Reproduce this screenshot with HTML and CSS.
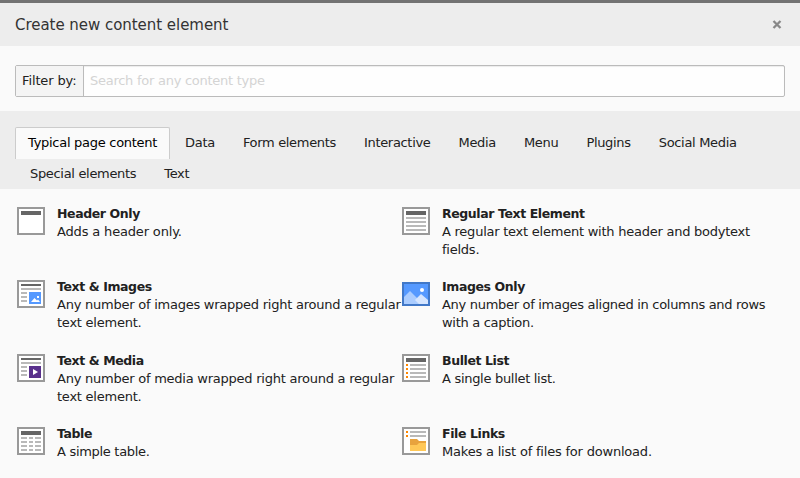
FILE: index.html
```
<!DOCTYPE html>
<html lang="en">
<head>
<meta charset="utf-8">
<title>Create new content element</title>
<link rel="stylesheet" href="styles.css">
</head>
<body>
<header class="modal-header">
  <h1>Create new content element</h1>
  <button class="close" aria-label="Close"><svg width="10" height="9" viewBox="0 0 10 9"><path d="M1.5 1l7 7M8.500 1l-7 7" stroke="#888" stroke-width="2.300"/></svg></button>
</header>
<div class="filter">
  <label for="q">Filter by:</label>
  <input id="q" type="text" placeholder="Search for any content type">
</div>
<nav class="tabs">
  <a class="active">Typical page content</a><a>Data</a><a>Form elements</a><a>Interactive</a><a>Media</a><a>Menu</a><a>Plugins</a><a>Social Media</a><a>Special elements</a><a>Text</a>
</nav>
<main class="items">
  <article>
    <svg class="icon" viewBox="0 0 28 28"><path class="frame" d="M1 1h26v26H1z"/><path class="dark" d="M4 4h20v4H4z"/></svg>
    <div><h2>Header Only</h2><p>Adds a header only.</p></div>
  </article>
  <article>
    <svg class="icon" viewBox="0 0 28 28"><path class="frame" d="M1 1h26v26H1z"/><path class="dark" d="M4 4h20v4H4z"/><path class="light" d="M4 10h20v2H4zM4 14h20v2H4zM4 18h20v2H4zM4 22h20v2H4z"/></svg>
    <div><h2>Regular Text Element</h2><p>A regular text element with header and bodytext<br>fields.</p></div>
  </article>
  <article>
    <svg class="icon" viewBox="0 0 28 28"><path class="frame" d="M1 1h26v26H1z"/><path class="dark" d="M4 4h20v2H4z"/><path class="light" d="M4 8h20v2H4zM4 12h6v2H4zM4 16h6v2H4zM4 20h6v2H4z"/><path fill="#5599ff" d="M12 12h12v12H12z"/><path fill="#fff" d="M20 16h2v2h-2zM14 22l3.500-4 2.500 2.500 1-1 2 2.500z"/></svg>
    <div><h2>Text &amp; Images</h2><p>Any number of images wrapped right around a regular<br>text element.</p></div>
  </article>
  <article>
    <svg class="icon" viewBox="0 0 28 28"><path fill="#4178c8" d="M0 2h28v24H0z"/><path fill="#5599ff" d="M2 4h24v20H2z"/><path fill="#aaccff" d="M2 17l6-6 9 9v4H2z"/><path fill="#d5e5ff" d="M13 20l6-6 7 6v4H17z"/><circle cx="20" cy="10" r="2" fill="#fff"/></svg>
    <div><h2>Images Only</h2><p>Any number of images aligned in columns and rows<br>with a caption.</p></div>
  </article>
  <article>
    <svg class="icon" viewBox="0 0 28 28"><path class="frame" d="M1 1h26v26H1z"/><path class="dark" d="M4 4h20v2H4z"/><path class="light" d="M4 8h20v2H4zM4 12h6v2H4zM4 16h6v2H4zM4 20h6v2H4z"/><path fill="#59308c" d="M12 12h12v12H12z"/><path fill="#fff" d="M16 15l5 3-5 3z"/></svg>
    <div><h2>Text &amp; Media</h2><p>Any number of media wrapped right around a regular<br>text element.</p></div>
  </article>
  <article>
    <svg class="icon" viewBox="0 0 28 28"><path class="frame" d="M1 1h26v26H1z"/><path class="dark" d="M4 4h20v4H4z"/><path class="light" d="M8 10h16v2H8zM8 14h16v2H8zM8 18h16v2H8zM8 22h16v2H8z"/><path class="orange" d="M4 10h2v2H4zM4 14h2v2H4zM4 18h2v2H4zM4 22h2v2H4z"/></svg>
    <div><h2>Bullet List</h2><p class="short">A single bullet list.</p></div>
  </article>
  <article>
    <svg class="icon" viewBox="0 0 28 28"><path class="frame" d="M1 1h26v26H1z"/><path class="dark" d="M4 4h20v4H4z"/><path class="light" d="M4 10h6v2H4zM12 10h4v2h-4zM18 10h6v2h-6zM4 14h6v2H4zM12 14h4v2h-4zM18 14h6v2h-6zM4 18h6v2H4zM12 18h4v2h-4zM18 18h6v2h-6zM4 22h6v2H4zM12 22h4v2h-4zM18 22h6v2h-6z"/></svg>
    <div><h2>Table</h2><p class="short">A simple table.</p></div>
  </article>
  <article>
    <svg class="icon" viewBox="0 0 28 28"><path class="frame" d="M1 1h26v26H1z"/><path class="light" d="M8 4h16v2H8zM8 8h16v2H8z"/><path class="orange" d="M4 4h2v2H4zM4 8h2v2H4z"/><path fill="#e8a33d" d="M8 12h7l2 2h7v4H8z"/><path fill="#ffc857" d="M8 18h7l2-2h7v8H8z"/></svg>
    <div><h2>File Links</h2><p class="links">Makes a list of files for download.</p></div>
  </article>
</main>
</body>
</html>
```
FILE: styles.css
```
* { box-sizing: border-box; }
body {
  margin: 0;
  height: 478px;
  overflow: hidden;
  background: #fafafa;
  border-top: 3px solid #737373;
  color: #212121;
  font: 13px/18px "DejaVu Sans", Verdana, sans-serif;
  letter-spacing: -.24px;
}
h1, h2, p { margin: 0; }
.modal-header {
  display: flex;
  align-items: center;
  justify-content: space-between;
  height: 43px;
  padding: 0 18px 0 15px;
  background: #ededed;
}
h1 { font-size: 15px; font-weight: 400; color: #333; letter-spacing: -.04px; }
.close { display: flex; padding: 0; border: 0; background: none; }
.filter {
  display: flex;
  height: 32px;
  margin: 19px 15px 14px;
  border: 1px solid #bbb;
  border-radius: 2px;
  background: #fefefe;
}
.filter label {
  width: 68px;
  padding: 6px 0 0 6px;
  border-right: 1px solid #bbb;
  background: #f4f4f4;
  white-space: nowrap;
  letter-spacing: -.12px;
}
.filter input {
  flex: 1;
  padding: 0 6px;
  border: 0;
  background: transparent;
  box-shadow: inset 0 1px 1px rgba(0, 0, 0, .075);
  font: inherit;
  letter-spacing: -.26px;
}
.filter input::placeholder { color: #d4d4d4; opacity: 1; }
.tabs {
  display: flex;
  flex-wrap: wrap;
  align-content: flex-start;
  height: 78px;
  padding: 16px 15px 0 16px;
  background: #ededed;
  letter-spacing: -.32px;
}
.tabs a { height: 31px; padding: 7px 14px 0; white-space: nowrap; }
.tabs .active {
  height: 32px;
  margin: 0 1px -1px -1px;
  padding: 6px 12px 0;
  border: 1px solid #ccc;
  border-bottom: 0;
  border-radius: 2px 2px 0 0;
  background: #fafafa;
  color: #000;
  letter-spacing: -.28px;
}
.items {
  display: grid;
  grid-template-columns: 385px 385px;
  grid-template-rows: 73px 74px 73px 73px;
  padding: 16px 0 0 17px;
}
article { display: flex; gap: 12px; white-space: nowrap; }
.icon { flex: none; width: 28px; height: 28px; margin-top: 2px; }
h2 { font-size: 12.500px; line-height: 18px; font-weight: 700; letter-spacing: -.4px; }
article:nth-child(4) p, .short { letter-spacing: -.3px; }
article:first-child p { letter-spacing: -.16px; }
.links { letter-spacing: -.2px; }
.frame { fill: #fff; stroke: #999; stroke-width: 2; }
.dark { fill: #666; }
.light { fill: #b9b9b9; }
.orange { fill: #ff8700; }
```
